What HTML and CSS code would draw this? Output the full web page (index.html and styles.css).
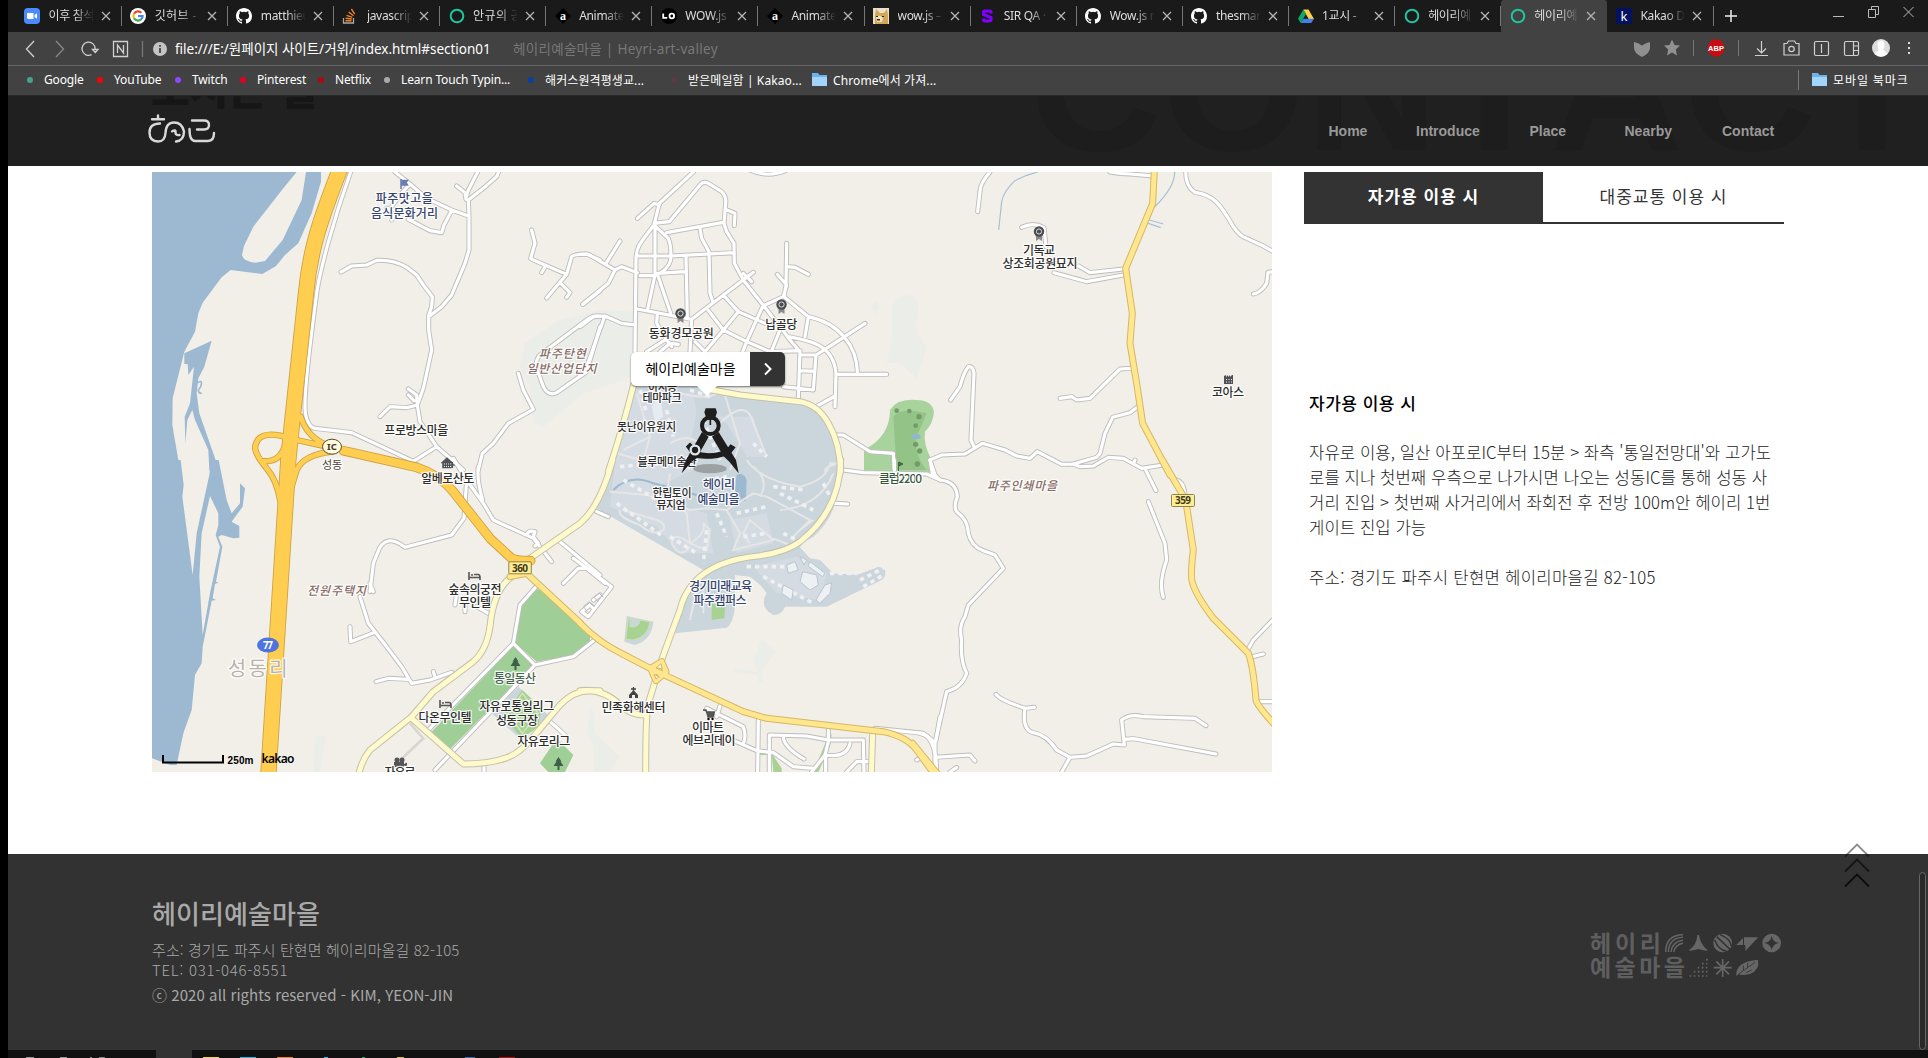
FILE: index.html
```html
<!DOCTYPE html>
<html lang="ko">
<head>
<meta charset="utf-8">
<title>헤이리예술마을 | Heyri-art-valley</title>
<link rel="stylesheet" href="styles.css">
</head>
<body>
<svg class="defs" width="0" height="0">
  <defs>
    <symbol id="x" viewBox="0 0 10 10"><path d="M1 1 9 9M9 1 1 9" fill="none" stroke="#b4b4b4" stroke-width="1.3"/></symbol>
    <symbol id="github" viewBox="0 0 16 16"><path fill="#fff" d="M8 0C3.58 0 0 3.58 0 8c0 3.54 2.29 6.53 5.47 7.59.4.07.55-.17.55-.38v-1.49c-2.01.37-2.53-.49-2.69-.94-.09-.23-.48-.94-.82-1.13-.28-.15-.68-.52-.01-.53.63-.01 1.08.58 1.23.82.72 1.21 1.87.87 2.33.66.07-.52.28-.87.51-1.07-1.78-.2-3.64-.89-3.64-3.95 0-.87.31-1.59.82-2.15-.08-.2-.36-1.02.08-2.12 0 0 .67-.21 2.2.82a7.4 7.4 0 0 1 4 0c1.53-1.04 2.2-.82 2.2-.82.44 1.1.16 1.92.08 2.12.51.56.82 1.27.82 2.15 0 3.07-1.87 3.75-3.65 3.95.29.25.54.73.54 1.48v2.19c0 .21.15.46.55.38A8 8 0 0 0 16 8c0-4.42-3.58-8-8-8Z"/></symbol>
    <symbol id="ring" viewBox="0 0 16 16"><circle cx="8" cy="8" r="6.3" fill="none" stroke="#20c5a0" stroke-width="2"/></symbol>
    <symbol id="adiamond" viewBox="0 0 16 16"><path d="M8 0 16 8 8 16 0 8Z" fill="#000"/><text x="8" y="12" text-anchor="middle" font-family="Liberation Serif" font-weight="700" font-size="12" fill="#fff">a</text></symbol>
    <symbol id="folder" viewBox="0 0 15 13"><path d="M0 0h6l1.5 2H15v11H0Z" fill="#6fb3e6"/><path d="M0 4h15v9H0Z" fill="#a3d4fb"/></symbol>
    <symbol id="park" viewBox="0 0 12 15"><path d="M3 9v6l3-2 3 2V9" fill="#8a8a8a"/><circle cx="6" cy="5.5" r="5.2" fill="#4a4d50"/><circle cx="6" cy="5.5" r="2.6" fill="none" stroke="#ddd"/></symbol>
    <symbol id="bed" viewBox="0 0 13 9"><path d="M1 0v8M1 5.5h11V8M3 3h2M6 2.5h4q2 0 2 3" fill="none" stroke="#555" stroke-width="1.6"/></symbol>
    <symbol id="tree" viewBox="0 0 10 14"><path d="M5 0 8 4.500H7L10 9H6v4H4V9H0l3-4.500H2Z" fill="#3e6048"/></symbol>
  </defs>
</svg>
<div class="desktop-edge"></div>
<div class="window">
  <div class="tabs">
    <div class="tab"><svg class="fav" viewBox="0 0 16 16"><rect width="16" height="16" rx="4" fill="#4a8cff"/><path d="M3 5h6.500v6H4.500Q3 11 3 9.500ZM10.500 7 13 5.200v5.600L10.500 9Z" fill="#fff"/></svg><span>이후 참석</span><svg class="close"><use href="#x"/></svg></div>
    <div class="tab"><svg class="fav" viewBox="0 0 16 16"><circle cx="8" cy="8" r="8" fill="#fff"/><g fill="none" stroke-width="2.200"><path d="M11.300 4.800A4.600 4.600 0 0 0 4 5.700" stroke="#ea4335"/><path d="M4 5.700a4.600 4.600 0 0 0 0 4.600" stroke="#fbbc05"/><path d="M4 10.300a4.600 4.600 0 0 0 7 1.100" stroke="#34a853"/><path d="M11 11.400A4.500 4.500 0 0 0 12.600 8H8" stroke="#4285f4"/></g></svg><span class="wide">깃허브 -</span><svg class="close"><use href="#x"/></svg></div>
    <div class="tab"><svg class="fav"><use href="#github"/></svg><span>matthieu</span><svg class="close"><use href="#x"/></svg></div>
    <div class="tab"><svg class="fav" viewBox="0 0 16 16"><path d="M1.500 10v5h10v-5" fill="none" stroke="#aaa" stroke-width="1.300"/><path d="M3.500 12.700h6M3.700 10.300l6 .7M4.600 7.300l5.700 2M6.600 4l4.800 3.800M9.400 1l3.300 5.200" stroke="#f48024" stroke-width="1.400"/></svg><span>javascrip</span><svg class="close"><use href="#x"/></svg></div>
    <div class="tab"><svg class="fav"><use href="#ring"/></svg><span class="wide">안규의 공</span><svg class="close"><use href="#x"/></svg></div>
    <div class="tab"><svg class="fav"><use href="#adiamond"/></svg><span>Animate</span><svg class="close"><use href="#x"/></svg></div>
    <div class="tab"><svg class="fav" viewBox="0 0 16 16"><circle cx="8" cy="8" r="8" fill="#000"/><path d="M2.200 5.500v4.300h4" fill="none" stroke="#fff" stroke-width="1.800"/><circle cx="10.800" cy="8" r="2.300" fill="none" stroke="#fff" stroke-width="1.800"/></svg><span>WOW.js</span><svg class="close"><use href="#x"/></svg></div>
    <div class="tab"><svg class="fav"><use href="#adiamond"/></svg><span>Animate</span><svg class="close"><use href="#x"/></svg></div>
    <div class="tab"><svg class="fav" viewBox="0 0 16 16"><rect width="16" height="16" fill="#e8e0cd"/><path d="M2 16V7L3 1l4 4h4l3-4 1 6v9Z" fill="#d2a858"/><path d="M3 9q4-3 7 1l-1 4H4Z" fill="#f3e3bd"/><path d="M3 8h2v1H3ZM9 8h2v1H9ZM4 11h3v1.500H4Z" fill="#33271a"/></svg><span>wow.js –</span><svg class="close"><use href="#x"/></svg></div>
    <div class="tab"><svg class="fav" viewBox="0 0 16 16"><path d="M12 5.500V4.500Q12 3 10.500 3H6Q4.500 3 4.500 4.500v2l7.500 3v2q0 1.500-1.500 1.500H6Q4.500 13 4.500 11.500V10.500" fill="none" stroke="#8000ff" stroke-width="3"/></svg><span>SIR QA ·</span><svg class="close"><use href="#x"/></svg></div>
    <div class="tab"><svg class="fav"><use href="#github"/></svg><span>Wow.js n</span><svg class="close"><use href="#x"/></svg></div>
    <div class="tab"><svg class="fav"><use href="#github"/></svg><span>thesmar</span><svg class="close"><use href="#x"/></svg></div>
    <div class="tab"><svg class="fav" viewBox="0 0 16 16"><path d="M5.300 1.500h5.200L16 11h-5.300Z" fill="#ffcf48"/><path d="M5.300 1.500 8 6 2.700 15 0 10.700Z" fill="#11a861"/><path d="M5.300 10.700H16L13.300 15H2.700Z" fill="#3f80ea"/></svg><span>1교시 -</span><svg class="close"><use href="#x"/></svg></div>
    <div class="tab"><svg class="fav"><use href="#ring"/></svg><span>헤이리예</span><svg class="close"><use href="#x"/></svg></div>
    <div class="tab active"><svg class="fav"><use href="#ring"/></svg><span>헤이리예</span><svg class="close"><use href="#x"/></svg></div>
    <div class="tab"><svg class="fav" viewBox="0 0 16 16"><rect width="16" height="16" fill="#02125e"/><text x="8" y="13" text-anchor="middle" font-family="Noto Sans" font-size="13" fill="#fff">k</text></svg><span>Kakao D</span><svg class="close"><use href="#x"/></svg></div>
    <svg class="newtab" viewBox="0 0 14 14"><path d="M7 1v12M1 7h12" stroke="#eee" stroke-width="1.500"/></svg>
    <svg class="winctl" viewBox="0 0 84 16"><g fill="none" stroke="#bbb"><path d="M0 12.500h11"/><path d="M35.500 5.500h7v8h-7ZM38.500 5.500v-3h7v8h-3M70.500 3l10 10M80.500 3l-10 10"/></g></svg>
  </div>

  <div class="address">
    <svg class="navicons" viewBox="16 0 136 32"><g fill="none" stroke="#d0d0d0" stroke-width="1.300"><path d="m34 9-7.500 8 7.500 8"/><path d="m56 9 7.500 8-7.500 8" stroke="#888"/><path d="M91.500 22.700A6.600 6.600 0 1 1 95.200 17M92.500 17.500h5.500l-2.700 3Z"/><path d="M113.500 9.500h14v15h-14Z"/><path d="M117.500 21v-8l6 8v-8"/><path d="M142.500 9v16" stroke="#777"/></g></svg>
    <svg class="info" viewBox="0 0 14 14"><circle cx="7" cy="7" r="7" fill="#c4c4c4"/><path d="M7 3v1.800M7 6v5" stroke="#424242" stroke-width="1.800"/></svg>
    <span class="url">file:///E:/원페이지 사이트/거위/index.html#section01</span>
    <span class="pagetitle">헤이리예술마을 | Heyri-art-valley</span>
    <svg class="tools" viewBox="1632 0 288 34"><path d="M1634 11q4 .5 8 3.500 4-3 8-3.500v6q0 5-8 9-8-4-8-9Z" fill="#909090"/><path d="m1672 8.500 2.500 5.500 5.500.6-4.200 4 1.200 6-5-3-5 3 1.200-6-4.200-4 5.500-.6Z" fill="#909090"/><path d="M1693.500 9v16M1738.500 9v16" stroke="#777"/><path d="M1712.500 8.500h7l4.500 5v7l-4.500 5h-7l-4.500-5v-7Z" fill="#c70d12"/><text x="1716" y="19.800" text-anchor="middle" font-family="Liberation Sans" font-size="7.500" font-weight="700" fill="#fff">ABP</text><g fill="none" stroke="#d0d0d0" stroke-width="1.200"><path d="M1761.500 10v12m-4.500-4.500 4.500 4.500 4.500-4.500M1755 24.500h13"/><path d="M1784 12.500h3l1.500-2.500h6l1.500 2.500h3V24h-15Z"/><circle cx="1791.500" cy="18" r="2.700"/><rect x="1814.500" y="10.500" width="14" height="14" rx="1.500"/><path d="M1821.500 13v9"/><rect x="1844.500" y="10.500" width="14" height="14" rx="1.500"/><path d="M1853.500 10.500v14M1853.500 15h5M1853.500 19.500h5"/></g><circle cx="1881" cy="17" r="9" fill="#ddd"/><path d="M1877.500 14q0-4.500 3.500-4.500t3.500 4.500q0 3-1.500 4.500 1 2 4.500 3.500-2.500 3.500-6.500 3.500t-6.500-3.500q3.500-1.500 4.500-3.500-1.500-1.500-1.500-4.500Z" fill="#fff"/><path d="M1909 11v2M1909 16v2M1909 21v2" stroke="#ddd" stroke-width="2"/></svg>
  </div>

  <div class="bookmarks">
    <div class="bm teal">Google</div><div class="bm red">YouTube</div><div class="bm purple">Twitch</div><div class="bm crimson">Pinterest</div><div class="bm dkred">Netflix</div><div class="bm grey">Learn Touch Typin...</div><div class="bm blue">해커스원격평생교...</div><div class="bm maroon">받은메일함 | Kakao...</div>
    <div class="bmf"><svg><use href="#folder"/></svg>Chrome에서 가져...</div>
    <div class="bmf mobile"><svg><use href="#folder"/></svg>모바일 북마크</div>
  </div>

  <header class="site">
    <div class="ghost-ko">오시는 길</div>
    <div class="ghost-en">CONTACT</div>
    <svg class="logo" viewBox="0 0 68 30"><g fill="none" stroke="#d9d9d9" stroke-width="2.400" stroke-linecap="round"><path d="M10 1.500v3.500M4 5.200h12"/><path d="M12 9.500Q1.500 9.500 1.500 18.500T10 27.500q7 0 7.500-8.500Q18 8.500 26 8.500T36 17.500q0 9-8 10M27.500 17v0q-.5 5 4 4M27 16.500q-2 0-3 1"/><path d="M44 6.500h12q5 0 5 4.500t-5 4.500H49M41.500 15q0 12 5.500 12h13q6 0 6-8"/></g></svg>
    <nav><a>Home</a><a>Introduce</a><a>Place</a><a>Nearby</a><a>Contact</a></nav>
  </header>

  <main>
    <div class="map">
      <svg class="mapart" viewBox="152 172 1120 600">
        <defs>
          <g id="minor">
            <g transform="translate(140 160) scale(.33333)"><path d="M765 36 810 72 860 115 935 150 985 168M810 72 780 105 755 140M805 178 870 212 905 218 912 195 935 152M740 145 770 150 755 180M1013 36 985 90 978 115M1078 30 1070 50 1030 85 985 120 987 168V270L975 310 935 405 905 440 870 467M950 78 975 98 978 118M603 336 635 318 680 315 710 301Q760 298 800 322L830 345 850 375 877 410 875 440 866 467V510L875 570 860 640 850 685 832 735 840 785 890 860 970 930M720 770 750 740 800 743 832 735M805 687 830 705 832 735M805 705 822 722M632 36C580 180 540 330 530 400 515 520 495 650 495 740 495 780 510 803 525 805L635 818 820 904 890 860M1175 210 1185 250 1172 295 1180 300 1280 343 1295 290Q1300 283 1340 282L1380 300M1215 320 1205 338M1280 343 1220 414M1260 368 1290 398 1280 412M1328 433 1380 393M1380 468Q1360 465 1340 480L1200 585Q1185 600 1190 625L1210 680Q1225 710 1250 698L1340 635 1380 500M1135 640 1150 690 1180 748 1105 790 1075 830 1060 850 1027 880 1015 930"/></g>
            <g transform="translate(580 160) scale(.33333)"><path d="M340 36 238 130 222 195C180 250 168 260 168 300L165 575M172 175 222 130 238 135M222 190 268 185 360 75Q370 62 385 70L425 95Q440 110 437 130L432 190 440 215 462 250 463 310 490 360 545 430 600 500 630 540 660 575 655 715M437 148 465 160 463 197M260 218 430 187M222 195 265 235Q275 260 272 300 265 330 225 347H180M225 195V345L203 448M360 205 365 235 387 275 390 400 400 428M172 288H272L463 278M232 340 315 335M318 290 322 470M235 350 272 460M172 447 335 478 520 337M490 340 515 365M232 460 230 490 260 540 275 560M335 478 330 575M200 575 255 540M240 575 270 550 295 553M345 545 375 575M380 445 430 510 500 545 570 575 660 572M430 405 475 455 555 490M475 455 430 510 375 575M550 435 500 545 488 575M555 435 610 410 620 375 592 343M620 250 618 375 612 410 685 470C780 490 830 560 832 635M620 320 645 322 685 343M685 470 675 530M625 530C680 540 760 550 768 640L765 740M600 510 575 572M855 490 740 565 708 585 700 690 610 680M768 643H920M660 632 705 634M662 585H708M765 708 712 738M0 283H25L105 330 85 370 10 432M78 310 120 243M105 330 125 320 172 338M0 500 40 470 75 468 125 490 158 494M72 475 20 620 0 645M770 825H790L870 875 940 880 943 930M510 30Q565 55 620 30"/></g>
            <g transform="translate(920 160) scale(.33333)"><path d="M210 36Q180 70 180 95L173 155M305 202Q340 185 372 203L378 260M475 318 510 338 610 327M402 338 500 365 610 345M570 36Q600 42 630 42L690 47M797 36Q797 80 825 97C880 105 900 130 940 200Q960 230 980 235L1030 258 1060 275M1060 335 1044 337 1040 370Q1020 400 1000 402M92 720 120 680Q130 640 145 620 160 618 162 640L153 840 162 860M420 715 455 710 470 720 510 715 600 627 635 625M653 740 630 758 578 772 555 820 540 880 530 892M38 945 30 900 65 885 135 882 187 850 255 870 290 888 330 895 352 875 425 913 460 912 530 892M460 912 480 920 520 918 565 892 610 895 665 925 730 915M645 900 640 912"/></g>
            <g transform="translate(140 460) scale(.33333)"><path d="M1015 20Q1010 60 1028 120M940 -5 980 60 1030 130 1060 180 1180 235 1235 305M980 60 972 175 935 225 795 262Q735 215 712 280L700 310 690 395M660 410 685 490 740 560 785 620 815 670 870 660 935 637M708 665 745 655 805 658M630 500 632 545 705 517M880 635 885 650M1162 222Q1165 210 1185 215L1180 230 1195 250 1185 258M1260 245 1380 345M1270 370 1315 325 1340 325 1395 370M1190 378 1140 435 1120 550 1185 615 885 930M1120 550 865 810M1185 615 1300 590 1370 535M1225 780 1275 825M950 400 945 435M975 415V455M1010 440 1045 460M1032 915V940M690 370 700 395"/></g>
            <g transform="translate(580 460) scale(.33333)"><path d="M-20 295 95 380 25 470 5 455 30 435 40 445M40 420 60 405M790 30 850 38 1040 42 1080 60M943 0V30M765 130 803 132M50 155 85 170M420 738 410 770M380 745 490 800Q500 830 490 850M400 815 530 872 580 878 640 920 700 925M535 780 533 936M568 936V825L680 828 745 840 850 840 852 936M610 830Q610 860 672 897M745 810V845L735 885 695 936M735 885Q800 895 810 850M800 936 830 905H865M737 890V936M885 805 1030 820Q1070 845 1070 936M1080 770 1068 840M1010 900 1022 893"/></g>
            <g transform="translate(920 460) scale(.33333)"><path d="M30 0 45 45 60 60Q110 65 112 110 100 140 110 155 145 180 145 220 155 260 190 272L225 285 250 325 145 435 135 470Q115 500 125 540 120 600 140 640 130 670 105 685L80 695 45 850V930M677 30 708 92M770 60Q790 65 795 100M685 125 735 250 740 300Q715 370 730 412M1060 478 1000 540 983 570M990 592 1030 582M1020 725H1060M228 703Q240 720 315 745L343 742M315 745Q305 810 340 818 380 825 410 870L450 892 425 936M450 892 500 888 580 852 613 855 605 780Q630 760 670 770L825 775 858 797M613 838 640 836 888 882M0 820Q25 825 45 850M45 892 150 885 165 903M90 936 110 922"/></g>
          </g>
          <g id="local">
            <g transform="translate(580 160) scale(.33333)"><path d="M162 670Q130 800 85 935M395 690 480 705 660 725Q715 735 745 790 780 850 782 935"/></g>
            <g transform="translate(580 460) scale(.33333)"><path d="M98 0Q60 140 0 190L-150 295M782 0Q780 150 660 245 620 275 540 287 400 300 340 370 310 405 300 450 270 530 245 600M225 665 205 730Q197 760 197 940M0 692Q70 685 120 735 150 765 195 765M878 825 874 940"/></g>
            <g transform="translate(140 460) scale(.33333)"><path d="M1115 350Q1060 390 1050 500 1040 570 1000 605L880 695 815 770 690 870Q665 900 656 945M815 775 970 912Q1050 912 1100 893 1140 880 1180 830L1260 735Q1300 692 1350 692H1380"/></g>
          </g>
          <g id="trunk">
            <g transform="translate(920 160) scale(.33333)"><path d="M703 30 698 130 617 325 637 460 630 550 650 670 668 790 750 945"/></g>
            <g transform="translate(920 460) scale(.33333)"><path d="M727 0 797 120 820 270Q810 350 818 370 830 410 880 475L985 580Q1000 620 1008 720 1010 735 1062 792M-22 850 55 945"/></g>
            <g transform="translate(580 460) scale(.33333)"><path d="M0 490Q60 550 120 578L210 625 490 755 560 775 910 815Q980 830 1010 870L1065 945M245 605 212 625 228 662 258 635 245 605"/></g>
            <g transform="translate(140 460) scale(.33333)"><path d="M1110 350 1160 340 1322 490"/></g>
          </g>
          <g id="ramps"><g transform="translate(140 160) scale(.33333)"><path d="M470 840 570 862M435 830Q350 808 345 865 350 890 380 925 410 960 420 1020M435 855Q420 910 365 903M482 770Q500 830 560 855M575 875Q490 885 470 930L455 980"/></g></g>
          <g id="branch"><g transform="translate(140 460) scale(.33333)"><path d="M610 -28 830 22Q900 45 940 95L1050 235 1115 295Q1130 303 1172 302"/></g></g>
          <g id="freeway"><g transform="translate(140 160) scale(.33333)"><path d="M605 15C540 180 510 270 498 400L455 800 445 900 385 1845"/></g></g>
        </defs>
        <rect x="152" y="172" width="1120" height="600" fill="#f2efe9"/>
        <g fill="#ebede9">
          <path transform="translate(140 160) scale(.33333)" d="M1155 550 1260 480 1380 450 1500 455 1480 650 1330 700 1210 800 1180 790 1170 680 1140 620Z"/>
          <path transform="translate(580 160) scale(.33333)" d="M935 440Q980 370 1015 430L1010 520 1040 560 1010 655 960 610 920 610 935 540ZM885 420 897 440 885 465 875 440Z"/>
          <path transform="translate(580 460) scale(.33333)" d="M545 538 590 575 545 630 550 665 535 665 530 645 460 635 470 625 530 635 520 600ZM30 745Q50 760 45 820L120 890 90 936H40Q50 850 20 820Z"/>
          <path transform="translate(140 460) scale(.33333)" d="M525 830 560 825 540 936H520Z"/>
        </g>
        <g fill="#9db9d1">
          <path transform="translate(140 160) scale(.33333)" d="M36 36H470L430 85 340 200 312 258 306 285Q310 305 345 308L375 303 428 240 485 120 498 36H543V65L515 160 475 250 435 285 408 318 367 342 272 330 245 352 188 428 175 460 165 515 133 575 98 715 97 795 115 900 122 932H36ZM133 580 215 542 193 620 175 655 170 700 178 760 238 932H208L205 870 165 780 157 750 142 780 136 850 134 770 150 730 162 620 145 645 143 612H133Z"/>
          <path transform="translate(140 460) scale(.33333)" fill-rule="evenodd" d="M36 0H122L131 75 127 110 158 345 170 220 208 45 214 0H236L260 120 275 160 300 130V70L315 85 308 140 275 185 298 198V233L280 235 245 225 235 230 247 260 228 365 235 368 225 372 218 415 228 420 215 422 200 500 188 560 185 610 165 645 155 750 130 820 110 915H90L36 895ZM210 108 235 160V195L227 225 240 260 210 400 188 525 178 350 185 220Z"/>
          <path transform="translate(140 160) scale(.33333)" fill="none" stroke="#9db9d1" stroke-width="5" d="M170 670Q190 655 182 680L175 690Q175 700 185 700"/>
        </g>
        <g fill="none" stroke="#a5bfd5" stroke-width="1"><path transform="translate(920 160) scale(.33333)" stroke-width="3.500" d="M353 36 320 46 285 62Q250 95 245 125L236 210M764 36Q765 80 705 140M688 180 730 192M685 190 722 203"/></g>
        <g transform="translate(580 160) scale(.33333)">
          <path fill="#cbd5dc" d="M165 680H400L700 735Q775 800 785 935L660 1162 690 1195 720 1200 760 1240 830 1245 885 1225Q900 1215 915 1230 920 1250 905 1260L740 1340H615Q605 1365 580 1365 535 1340 560 1300 550 1280 510 1250L465 1245 465 1340Q460 1390 440 1403L285 1420 320 1285 370 1230 50 1045 85 930Z"/>
          <path fill="#cbd5dc" d="M690 900H785Q785 1060 700 1130L600 1185H500Z"/>
          <path fill="#d5dbe3" d="M165 690 340 700 350 760 320 900 340 930 230 980 300 1040 380 1060 400 1180 300 1180 230 1100 90 1040 110 860ZM410 770 520 770 560 890 500 890 440 790ZM450 1080 560 1060 580 1150 470 1180ZM520 1220 650 1190 740 1240 720 1320 590 1300Z"/>
          <path fill="#9db9d1" d="M470 945Q490 935 500 960L498 1022 478 1025 465 990Z"/>
          <path fill="#e6ecf3" d="M215 740 240 705 250 770 225 785Z"/>
          <path fill="none" stroke="#9db9d1" stroke-width="6" d="M100 990Q150 940 220 970L350 1005"/>
          <g fill="none" stroke="#e6e6e6" stroke-width="6"><path d="M170 700 210 830 130 870M300 700Q380 720 410 700M270 850Q320 820 360 850M430 690 480 850 450 930M420 790Q500 710 520 790L560 890M210 830 190 900 330 925M110 880 200 905M90 995 200 1005 330 1050 380 1045 440 1050 520 1000 560 1010M120 1050Q110 1070 180 1095 220 1130 250 1110 260 1090 230 1080L130 1050M270 940 260 1000 320 1060 330 1150Q380 1120 370 1090L390 1110 380 1170 330 1150Q280 1110 275 1150 300 1200 330 1160M440 1050 480 1120 460 1170 580 1140 510 1080 490 1120 510 1150M500 900Q540 960 660 980 740 960 750 910H780M560 1010 690 1080 640 1130M600 1050Q720 1040 760 940M520 920Q570 960 540 1010M580 1135 640 1160M700 1080 660 1110M780 910Q730 920 735 935M350 1290 330 1380M370 1270V1360"/></g>
          <g fill="none" stroke="#eef0f2" stroke-width="11" stroke-dasharray="13 12"><path d="M180 690 200 760M260 750 280 830M330 690 390 710M370 780 420 900M520 850 560 890M120 920 250 910M130 960 250 1030M110 1030 250 1130M270 1130 350 1180M380 1110 370 1210M410 1060 440 1130M470 1060 560 1040M600 1000 700 1050M490 1130 560 1120M500 1220 650 1220M550 1250 700 1330M750 1240 830 1240M840 1260 910 1225M850 1280 910 1245M580 980 680 990M610 1120 650 1140M380 960 440 950M730 970 750 1010"/></g>
          <g fill="#eef1f4" stroke="#b9c6d0" stroke-width="3"><path d="M668 1235 710 1245 715 1275 690 1290 660 1265ZM735 1275 755 1268 750 1300 720 1330 708 1320ZM620 1215 645 1205 655 1230 625 1240ZM610 1275 640 1290 635 1320 605 1300ZM660 1190 680 1200 672 1215ZM690 1205 735 1240 728 1250 684 1218Z"/></g>
          <path fill="#a9d39c" d="M852 932V870Q930 830 930 750 950 715 1010 720 1055 720 1062 755 1060 790 1035 815 1030 850 1050 890L1060 937Z"/>
          <path fill="#93c386" d="M940 770Q960 740 1040 760L1010 830Q1000 880 1040 930H950Z"/>
          <g fill="#729b68"><circle cx="950" cy="752" r="7"/><circle cx="988" cy="753" r="7"/><circle cx="1017" cy="770" r="8"/><circle cx="1007" cy="797" r="7"/><circle cx="1007" cy="853" r="8"/><circle cx="1019" cy="873" r="8"/><circle cx="1012" cy="912" r="8"/></g><ellipse cx="1008" cy="830" rx="14" ry="7" fill="#8fb6d3"/>
        </g>
        <g transform="translate(580 460) scale(.33333)"><path fill="#cbd5dc" d="M140 468 220 485Q215 540 165 555L133 545Z"/><path fill="#a8d291" stroke="#c7e3b6" stroke-width="3" d="M145 475 210 485Q205 530 160 540L137 538ZM150 475V500Q175 505 180 482"/><path fill="#a8d291" d="M395 430 435 435 433 475 395 479ZM575 880 605 925V936H580ZM755 822 750 860 715 936H700L740 840ZM540 878H570V885H540Z"/></g>
        <g transform="translate(140 460) scale(.33333)"><path fill="#9fcf97" d="M1190 388 1205 390 1350 525V545L1305 585 1190 605 1125 548 1140 440ZM1120 558 1180 615 930 868 875 815ZM1250 835 1300 885 1275 936H1225L1200 910Z"/><path fill="#cbd5dc" d="M1135 680 1230 770 1145 840 1055 760Z"/><path fill="#a8d291" d="M1147 690 1205 745 1195 800 1145 835 1090 770Z"/><path fill="none" stroke="#d4e8c4" stroke-width="4" d="M1147 700 1195 760 1147 820 1105 760Z"/></g>
        <path transform="translate(140 460) scale(.33333)" d="M810 790 850 835 760 920" fill="none" stroke="#d8d6d0" stroke-width="8"/>
        <g class="r"><use href="#minor" class="minor-case"/><use href="#minor" class="minor-fill"/>
        <use href="#local" class="local-case"/><use href="#local" class="local-fill"/>
        <use href="#trunk" class="trunk-case"/><use href="#trunk" class="trunk-fill"/>
        <use href="#ramps" class="ramp-case"/><use href="#branch" class="branch-case"/><use href="#freeway" class="free-case"/>
        <use href="#ramps" class="ramp-fill"/><use href="#branch" class="branch-fill"/><use href="#freeway" class="free-fill"/></g>
        <path transform="translate(580 460) scale(.33333)" d="M229 623 243 611 247 627ZM222 643 238 650 228 657Z" fill="#f7f3dc" stroke="#d4b863" stroke-width="3"/>
        <g transform="translate(580 460) scale(.33333)" fill="none" stroke="#bbb" stroke-width="3"><path d="M10 440 28 425 42 440M22 455 12 442M42 440 30 428M55 425 42 412 58 400 70 412"/></g>
        <g stroke="#8d8453" stroke-width="1"><rect x="508.800" y="561.800" width="22.500" height="12" rx="1" fill="#ffed91"/><rect x="1171.500" y="494.500" width="23" height="12" rx="1" fill="#ffed91"/><ellipse cx="332" cy="446.700" rx="9.500" ry="7.500" fill="#fffbe0" stroke="#554b28"/></g>
        <ellipse cx="268" cy="645" rx="11" ry="7.500" fill="#4f74e0"/>
        <g class="badge"><text x="520" y="571.500" textLength="16">360</text><text x="1183" y="504.300" textLength="16">359</text><text x="332" y="450.200" class="ic">IC</text><text x="268" y="648.700" fill="#fff" textLength="10">77</text></g>
        <use href="#park" x="674.500" y="308" width="12" height="15"/><use href="#park" x="775.500" y="299" width="12" height="15"/><use href="#park" x="1033" y="226" width="12" height="15"/>
        <use href="#bed" x="468" y="572" width="13" height="9"/><use href="#bed" x="439" y="700" width="13" height="9"/>
        <use href="#tree" x="510.500" y="657" width="10" height="14"/><use href="#tree" x="553.500" y="757" width="10" height="14"/>
        <path d="M401 179v10M401 180.500h6.500l-1.500 2 1.500 2.500H401" fill="#6c7cb5" stroke="#6c7cb5" stroke-width="1.500"/>
        <path d="M441 463 447 457.500 453 463H451.500V468H442.500V463ZM451 465h4" fill="#4f5254" stroke="#4f5254" stroke-width=".5"/><path d="M444 464h7M444 466.500h7" stroke="#eee" stroke-dasharray="1 1"/><path d="M452.500 462v6M450.500 465h4" stroke="#4f5254" stroke-width="1.200"/>
        <path d="M1224 384v-8l2-1v2l2-2v2l2-2v2l2-2h1v9Z" fill="#4f5254"/><path d="M1226 379.500h6M1226 382h6" stroke="#eee" stroke-dasharray="1 1.500"/>
        <path d="M633.500 687v6M631 689h5" stroke="#444" stroke-width="1.300"/><path d="M633.500 690 638 695v3h-3v-3h-3v3h-3v-3Z" fill="#444"/>
        <path d="M703 710h3l2 7h5l1.500-5H707" fill="#555" stroke="#555" stroke-width="1.300"/><circle cx="708.500" cy="719" r="1.200"/><circle cx="712.500" cy="719" r="1.200"/>
        <path d="M394 762h10v5h-10ZM404 764l3-1.500v4l-3-1Z" fill="#555"/><circle cx="397" cy="760" r="2.500" fill="#555"/><circle cx="402" cy="760" r="2.500" fill="#555"/><path d="M898.500 462v9M899 462l4 2-4 2Z" fill="#426b45" stroke="#426b45"/>
        <g class="lbl">
          <g class="navy"><text x="404.300" y="203" textLength="57">파주맛고을</text><text x="404.500" y="218" textLength="67">음식문화거리</text></g>
          <g class="it"><text x="562.300" y="358" textLength="47">파주탄현</text><text x="561.500" y="373" textLength="70">일반산업단지</text><text x="336.500" y="595" textLength="59">전원주택지</text><text x="1022" y="490" textLength="70">파주인쇄마을</text></g>
          <text x="416.300" y="435" textLength="64">프로방스마을</text><text class="s11" x="332" y="468.500">성동</text>
          <text x="681.300" y="337.500" textLength="65">동화경모공원</text><text x="781.300" y="328.500" textLength="32">납골당</text>
          <g class="sm"><text x="662.700" y="390.500" textLength="29">아지동</text><text x="662" y="402" textLength="39">테마파크</text><text x="646.500" y="431" textLength="59">못난이유원지</text><text x="667" y="466" textLength="59">블루메미술관</text><text x="672" y="496.500" textLength="39">한립토이</text><text x="671" y="508.500" textLength="29">뮤지엄</text></g>
          <text x="1039" y="255" textLength="32">기독교</text><text x="1040" y="268" textLength="75">상조회공원묘지</text><text x="1228" y="397" textLength="32">코아스</text>
          <text x="447.700" y="483" textLength="53">알베로산토</text><text x="475" y="594" textLength="53">숲속의궁전</text><text x="475" y="607" textLength="32">무인텔</text>
          <text x="515" y="683" textLength="42" fill="#4d6351">통일동산</text><text x="445" y="722" textLength="53">다온무인텔</text><text x="516.700" y="711" textLength="75">자유로통일리그</text><text x="517" y="724.500" textLength="42">성동구장</text><text x="543.700" y="746" textLength="53">자유로리그</text><text x="400" y="777" textLength="31">자유로</text>
          <g class="navy"><text x="719" y="489" textLength="32">헤이리</text><text x="718.500" y="503.500" textLength="42">예술마을</text><text x="720.500" y="591" textLength="63">경기미래교육</text><text x="720" y="605" textLength="53">파주캠퍼스</text></g>
          <text x="900.500" y="483" textLength="43" fill="#35563a">클럽2200</text><text x="633.500" y="712" textLength="64">민족화해센터</text><text x="708" y="732" textLength="32">이마트</text><text x="709" y="745" textLength="53">에브리데이</text>
          <text class="region" x="257.700" y="676" textLength="60">성동리</text>
        </g>
        <path d="M163 755v7.500h60V755" fill="none" stroke="#000" stroke-width="2"/>
        <text class="scale" x="227.500" y="764" textLength="26">250m</text><text class="kakao" x="261.500" y="763" textLength="33">kakao</text>
        <g transform="translate(580 160) scale(.33333)">
          <ellipse cx="390" cy="926" rx="50" ry="14" fill="#777" opacity=".55"/>
          <path d="M377 745h30l4 12-4 12v10h-30v-10l-4-12Z" fill="#1e1e1e"/><circle cx="391" cy="797" r="25" fill="none" stroke="#1e1e1e" stroke-width="12"/><path d="M391 775v20" stroke="#1e1e1e" stroke-width="5"/>
          <path d="M366 816 386 830 350 895 335 905 305 940 318 900ZM396 830 416 816 468 900 476 940 448 905 430 888Z" fill="#1e1e1e"/>
          <path d="M345 875Q395 890 440 870L448 882Q395 900 350 892ZM452 855 464 862 452 878 440 870ZM320 860 330 850 345 865 335 880Z" fill="#1e1e1e" stroke="#1e1e1e" stroke-width="4"/><circle cx="345" cy="870" r="13" fill="#1e1e1e" stroke="#dfe6ec" stroke-width="7"/>
        </g>
      </svg>
      <div class="popup"><span>헤이리예술마을</span><b><svg viewBox="0 0 10 14"><path d="m2 1.500 5.500 5.500L2 12.500" fill="none" stroke="#fff" stroke-width="2"/></svg></b></div>
    </div>
    <section class="directions">
      <div class="switch"><span class="on">자가용 이용 시</span><span>대중교통 이용 시</span></div>
      <h2>자가용 이용 시</h2>
      <p>자유로 이용, 일산 아포로IC부터 15분 &gt; 좌측 '통일전망대'와 고가도<br>로를 지나 첫번째 우측으로 나가시면 나오는 성동IC를 통해 성동 사<br>거리 진입 &gt; 첫번째 사거리에서 좌회전 후 전방 100m안 헤이리 1번<br>게이트 진입 가능</p>
      <p class="where">주소: 경기도 파주시 탄현면 헤이리마을길 82-105</p>
    </section>
  </main>

  <footer>
    <div class="finfo"><h3>헤이리예술마을</h3><p class="addr">주소: 경기도 파주시 탄현면 헤이리마올길 82-105</p><p class="tel">TEL: 031-046-8551</p><p class="copy">ⓒ 2020 all rights reserved - KIM, YEON-JIN</p></div>
    <svg class="flogo" viewBox="1590 932 194 48">
      <g fill="#5f5f5f" font-family="Noto Sans CJK KR, sans-serif" font-weight="700" font-size="23"><text x="1590" y="951.500" textLength="71">헤이리</text><text x="1590" y="976" textLength="95">예술마을</text></g>
      <g transform="translate(1560 820) scale(.33333)" fill="#666">
        <g fill="none" stroke="#666" stroke-width="4.500"><path d="M317 396Q317 345 369 344M325 396Q327 354 369 352M333 396Q337 364 369 361M341 396Q346 374 369 370"/></g>
        <path d="M412 345h5Q420 372 443 391 440 394 415 387 389 394 387 391 410 375 412 345ZM529 375 549 354V375ZM552 352H595L556 393V375H552Z"/>
        <circle cx="488" cy="369" r="28"/><path d="M470 350 512 390M480 344Q510 355 514 378M464 360Q475 390 500 394" fill="none" stroke="#323232" stroke-width="4.500"/>
        <circle cx="635" cy="369" r="28"/><path d="M635 347Q638 366 657 369 638 372 635 391 632 372 613 369 632 366 635 347Z" fill="#323232"/>
        <path d="M389 468h53M401 455h41M413 443h29M426 431h16M438 419h6" stroke="#666" stroke-width="5" stroke-dasharray="5 7.300" fill="none"/>
        <path d="M488 417v54M461 443h54M469 424 507 463M507 424 469 463" stroke="#666" stroke-width="5"/>
        <path d="M529 468Q525 425 594 419 600 450 570 462 545 468 536 462Z"/><path d="M536 462 585 427M550 437v15M563 429v13M558 458 575 450M548 445" stroke="#323232" stroke-width="2.500"/>
      </g>
    </svg>
  </footer>
  <div class="taskbar"><i class="t1"></i><i class="gap"></i><i class="t2"></i></div>
  <svg class="totop" viewBox="0 0 28 46"><g fill="none" stroke="#000" stroke-width="1.800"><path d="m2 14.500 12-12 12 12" opacity=".45"/><path d="m2 29.500 12-12 12 12" opacity=".6"/><path d="m2 44.500 12-12 12 12" opacity=".75"/></g></svg>
  <div class="thumb"></div>
</div>
</body>
</html>
```
FILE: styles.css
```css
* { box-sizing: border-box; }
body { margin: 0; width: 1928px; height: 1058px; overflow: hidden; display: flex; background: #fff; font-family: "Noto Sans", "Noto Sans CJK KR", sans-serif; }
.defs { position: absolute; }
.desktop-edge { width: 8px; background: #000; flex: none; }
.window { position: relative; width: 1920px; height: 1058px; display: flex; flex-direction: column; }

.tabs { height: 32px; background: #1a1a1a; display: flex; align-items: center; padding-left: 7.5px; color: #ddd; font-size: 12px; }
.tab { width: 106.130px; height: 32px; flex: none; display: flex; align-items: center; padding: 0 11px 0 8.500px; background: linear-gradient(#777, #777) right center / 1px 20px no-repeat; }
.tab.active { background: #424242; border-radius: 3px 3px 0 0; }
.fav { width: 16px; height: 16px; flex: none; margin-right: 8.500px; }
.tab span { width: 46px; overflow: hidden; white-space: nowrap; letter-spacing: -.3px; line-height: 20px; -webkit-mask-image: linear-gradient(90deg, #000 55%, transparent 98%); mask-image: linear-gradient(90deg, #000 55%, transparent 98%); }
.tab .wide { letter-spacing: .4px; }
.close { width: 10px; height: 10px; margin-left: 6px; }
.newtab { width: 14px; height: 14px; margin-left: 10px; }
.winctl { width: 84px; height: 16px; margin: -8px 11px 0 auto; }

.address { height: 33px; background: #424242; display: flex; align-items: center; padding: 0 0 1px 8px; white-space: nowrap; }
.navicons { width: 136px; height: 32px; }
.info { width: 14px; height: 14px; margin: 1px 8px 0 1px; }
.url { color: #fff; font-size: 13.500px; width: 338px; letter-spacing: -.02px; }
.pagetitle { color: #777; font-size: 13.500px; letter-spacing: .3px; }
.tools { width: 288px; height: 34px; margin: 0 8px 0 auto; }

.bookmarks { height: 31px; background: #424242; border-top: 1px solid #666; border-bottom: 1px solid #2a2a2a; display: grid; grid-template-columns: 70px 78px 65px 78px 66px 144px 143px 141px 1fr 120px; align-items: center; padding: 0 10px 2px 19px; color: #fff; font-size: 12px; letter-spacing: -.15px; white-space: nowrap; }
.bm { display: flex; align-items: center; gap: 11px; }
.bm::before { content: ""; width: 6px; height: 6px; border-radius: 50%; background: var(--dot); }
.teal { --dot: #4aa08f; } .red { --dot: #f00; } .purple { --dot: #9147ff; } .crimson { --dot: #e60023; } .dkred { --dot: #b20710; } .grey { --dot: #aaa; } .blue { --dot: #0b3fa8; } .maroon { --dot: #5c3a3e; }
.bm.blue, .bm.maroon, .bmf { letter-spacing: .1px; }
.bmf { display: flex; align-items: center; gap: 6px; }
.bmf svg { width: 15px; height: 13px; }
.mobile { border-left: 1px solid #777; height: 20px; padding-left: 13px; margin-left: 0; letter-spacing: .9px; }

.site { position: relative; height: 70px; background: #202020; overflow: hidden; flex: none; }
.ghost-ko { position: absolute; left: 143px; top: -43px; font: 900 42px/68px "Noto Sans CJK KR", sans-serif; color: #161616; white-space: nowrap; }
.ghost-en { position: absolute; left: 1021px; top: -110px; font: 700 184px/200px "Liberation Sans", sans-serif; font-kerning: none; color: #1d1d1d; }
.logo { position: absolute; left: 140px; top: 18px; width: 68px; height: 30px; }
nav { position: absolute; left: 1320.500px; top: 26px; display: grid; grid-template-columns: 87.500px 113.500px 95px 97.500px auto; font: 700 14px/18px "Liberation Sans", sans-serif; color: #999; }

main { display: flex; gap: 32px; padding: 6px 0 82px 144px; height: 688px; flex: none; }
.map { position: relative; width: 1120px; height: 600px; flex: none; }
.mapart { display: block; width: 1120px; height: 600px; }
.r { fill: none; stroke-linecap: round; stroke-linejoin: round; }
.minor-case { stroke: #bdbdbd; stroke-width: 15px; } .minor-fill { stroke: #fff; stroke-width: 9.500px; }
.local-case { stroke: #c4c1aa; stroke-width: 21px; } .local-fill { stroke: #fefacb; stroke-width: 15px; }
.trunk-case { stroke: #d4b863; stroke-width: 21px; } .trunk-fill { stroke: #ffe68f; stroke-width: 15px; }
.ramp-case { stroke: #c9a140; stroke-width: 19px; } .ramp-fill { stroke: #ffcd50; stroke-width: 14px; }
.branch-case { stroke: #c9a140; stroke-width: 29px; } .branch-fill { stroke: #ffcd50; stroke-width: 24px; }
.free-case { stroke: #c9a140; stroke-width: 49px; } .free-fill { stroke: #ffcd50; stroke-width: 44px; }
.lbl text { text-anchor: middle; paint-order: stroke; stroke: #fff; stroke-width: 2.500px; stroke-opacity: .85; stroke-linejoin: round; }
.lbl { font: 500 12px "Noto Sans CJK KR", sans-serif; fill: #2e2e2e; }
.lbl .sm, .lbl .s11 { font-size: 11px; }
.lbl .s11 { font-weight: 400; fill: #4d4336; }
.lbl .navy { fill: #35456f; }
.lbl .it { fill: #876b66; font-style: italic; }
.lbl .region { font-size: 20px; font-weight: 400; fill: #b9b3ac; }
.badge { font: 700 10px "Noto Sans", sans-serif; fill: #3f3a20; text-anchor: middle; }
.badge .ic { font-size: 9.500px; }
.scale { font: 700 10px "Liberation Sans", sans-serif; }
.kakao { font: 600 12px "Noto Sans", sans-serif; }

.popup { position: absolute; left: 479px; top: 180px; width: 154px; height: 34px; display: flex; border-radius: 5px; background: #fff; box-shadow: 0 1px 2px #0008; font: 400 14px/33px "Noto Sans CJK KR", sans-serif; }
.popup::after { content: ""; position: absolute; left: 66px; top: 34px; border: 10px solid transparent; border-top-color: #fff; border-bottom: 0; }
.popup span { width: 119px; text-align: center; }
.popup b { width: 35px; background: #333; border-radius: 0 5px 5px 0; display: flex; align-items: center; justify-content: center; }
.popup svg { width: 10px; height: 14px; }

.directions { width: 480px; font-family: "Noto Sans CJK KR", sans-serif; }
.switch { height: 52px; display: grid; grid-template-columns: 239px 1fr; border-bottom: 2px solid #333; font-size: 17px; line-height: 47px; text-align: center; color: #333; letter-spacing: 1px; }
.on { background: #333; color: #fff; font-weight: 700; }
.directions h2 { margin: 166px 0 0 5px; font-size: 17px; font-weight: 500; line-height: 25px; letter-spacing: .5px; }
.directions p { margin: 25px 0 0 5px; font-size: 16.700px; font-weight: 300; line-height: 25px; letter-spacing: .05px; color: #222; white-space: nowrap; }
.directions .where { letter-spacing: .27px; }

footer { height: 196px; flex: none; background: #323232; color: #a9a9a9; display: flex; justify-content: space-between; padding: 0 144px 0 144px; font-family: "Noto Sans CJK KR", sans-serif; }
.finfo { padding-top: 40px; }
.finfo h3 { margin: 0; font-size: 26px; font-weight: 500; line-height: 38px; letter-spacing: .1px; }
.finfo p { margin: 0; font-size: 15px; font-weight: 300; line-height: 20px; white-space: nowrap; }
.finfo .addr { margin-top: 8px; letter-spacing: .1px; }
.finfo .tel { letter-spacing: .75px; }
.finfo .copy { margin-top: 5px; font-weight: 400; letter-spacing: .06px; }
.flogo { width: 194px; height: 48px; margin-top: 78px; }
.taskbar { height: 8px; background: #111; display: flex; }
.taskbar .t1 { width: 148px; background: linear-gradient(#999, #999) 18px 7px / 8px 1px no-repeat, linear-gradient(#999, #999) 52px 7px / 7px 1px no-repeat, linear-gradient(#888, #888) 82px 7px / 2px 1px no-repeat, linear-gradient(#888, #888) 91px 7px / 6px 1px no-repeat; }
.taskbar .gap { width: 36px; background: #323232; }
.taskbar .t2 { width: 330px; background: linear-gradient(#f0d437, #f0d437) 11px 7px / 16px 1px no-repeat, linear-gradient(#29b3e6, #29b3e6) 48px 7px / 16px 1px no-repeat, linear-gradient(#e6871c, #e6871c) 85px 7px / 16px 1px no-repeat, linear-gradient(#29b3e6, #29b3e6) 132px 7px / 4px 1px no-repeat, linear-gradient(#3a6, #3a6) 170px 7px / 3px 1px no-repeat, linear-gradient(#cb3, #cb3) 205px 7px / 7px 1px no-repeat, linear-gradient(#3a6ab0, #3a6ab0) 273px 7px / 10px 1px no-repeat, linear-gradient(#b01010, #b01010) 307px 7px / 16px 1px no-repeat; }
.totop { position: absolute; left: 1835px; top: 842px; width: 28px; height: 46px; }
.thumb { position: absolute; left: 1911px; top: 872px; width: 7px; height: 178px; border: 1px solid #666; border-radius: 4px; background: #292929; }
```
